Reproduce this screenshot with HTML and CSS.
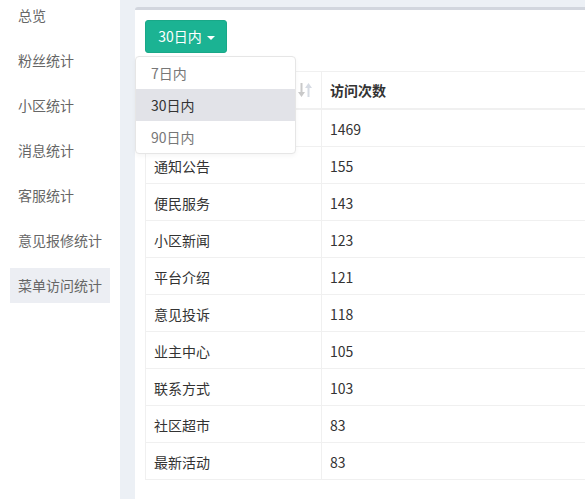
FILE: index.html
```html
<!DOCTYPE html>
<html lang="zh-CN">
<head>
<meta charset="utf-8">
<title>菜单访问统计</title>
<link rel="stylesheet" href="styles.css">
</head>
<body>
<div class="layout">
  <aside class="sidebar">
    <ul class="nav">
      <li class="nav-item">总览</li>
      <li class="nav-item">粉丝统计</li>
      <li class="nav-item">小区统计</li>
      <li class="nav-item">消息统计</li>
      <li class="nav-item">客服统计</li>
      <li class="nav-item">意见报修统计</li>
      <li class="nav-item active">菜单访问统计</li>
    </ul>
  </aside>
  <main class="main">
    <section class="box">
      <div class="toolbar">
        <button class="btn-green" type="button">30日内 <span class="caret"></span></button>
        <ul class="dropdown">
          <li class="dropdown-item">7日内</li>
          <li class="dropdown-item selected">30日内</li>
          <li class="dropdown-item">90日内</li>
        </ul>
      </div>
      <table class="data-table">
        <thead>
          <tr>
            <th class="col-name"><span class="th-inner">菜单名称<svg class="sort-icon" viewBox="0 0 14 14" width="14" height="14"><path d="M2.5 0h2v9h2.5l-3.5 5l-3.5-5h2.5z" fill="#c9c9c9"/><path d="M10.5 0l3.5 5h-2.5v9h-2v-9h-2.5z" fill="#d6dbe3"/></svg></span></th>
            <th>访问次数</th>
          </tr>
        </thead>
        <tbody>
          <tr><td>首页</td><td>1469</td></tr>
          <tr><td>通知公告</td><td>155</td></tr>
          <tr><td>便民服务</td><td>143</td></tr>
          <tr><td>小区新闻</td><td>123</td></tr>
          <tr><td>平台介绍</td><td>121</td></tr>
          <tr><td>意见投诉</td><td>118</td></tr>
          <tr><td>业主中心</td><td>105</td></tr>
          <tr><td>联系方式</td><td>103</td></tr>
          <tr><td>社区超市</td><td>83</td></tr>
          <tr><td>最新活动</td><td>83</td></tr>
        </tbody>
      </table>
    </section>
  </main>
</div>
</body>
</html>
```
FILE: styles.css
```css
html, body {
  margin: 0;
  padding: 0;
  height: 100%;
  overflow: hidden;
}
body {
  font-family: "Noto Sans CJK SC", "Liberation Sans", sans-serif;
  font-size: 14px;
  color: #333;
  background: #ffffff;
}
.layout {
  display: flex;
  height: 100%;
}
.sidebar {
  width: 120px;
  flex: 0 0 120px;
  background: #ffffff;
  padding: 0 10px;
  box-sizing: border-box;
}
.nav {
  list-style: none;
  margin: -2px 0 0 0;
  padding: 0;
}
.nav-item {
  width: 100px;
  height: 35px;
  line-height: 35px;
  padding-left: 8px;
  box-sizing: border-box;
  margin-bottom: 10px;
  color: #666;
  white-space: nowrap;
}
.nav-item.active {
  background: #eceef3;
}
.main {
  flex: 1 1 auto;
  background: #ecf0f5;
  padding: 7px 0 0 15px;
  overflow: hidden;
  min-width: 0;
}
.box {
  width: 620px;
  height: 100%;
  background: #ffffff;
  border-top: 3px solid #d2d6de;
  border-radius: 3px 0 0 0;
  padding: 10px;
  box-sizing: border-box;
}
.toolbar {
  position: relative;
  margin-bottom: 18px;
  height: 33px;
}
.btn-green {
  height: 33px;
  width: 82px;
  padding: 0 0 0 1px;
  border: 1px solid #19a888;
  border-radius: 3px;
  background: #1bb393;
  color: #ffffff;
  font-family: inherit;
  font-size: 14px;
  line-height: 31px;
  cursor: pointer;
}
.caret {
  display: inline-block;
  width: 0;
  height: 0;
  margin-left: 2px;
  vertical-align: middle;
  border-top: 4px solid #ffffff;
  border-left: 4px solid transparent;
  border-right: 4px solid transparent;
}
.dropdown {
  position: absolute;
  top: 36px;
  left: -10px;
  width: 159px;
  margin: 0;
  padding: 0;
  list-style: none;
  background: #ffffff;
  border: 1px solid #e6e6e6;
  border-radius: 4px;
  box-shadow: 0 2px 4px rgba(0, 0, 0, 0.04);
  z-index: 10;
  overflow: hidden;
}
.dropdown-item {
  height: 32px;
  line-height: 32px;
  padding: 0 15px;
  color: #777;
}
.dropdown-item.selected {
  background: #e2e3e8;
  color: #333;
}
.data-table {
  width: 100%;
  border-collapse: collapse;
  border: 1px solid #f0f0f0;
}
.data-table th,
.data-table td {
  border: 1px solid #f0f0f0;
  padding: 8px;
  line-height: 20px;
  text-align: left;
  color: #333;
}
.data-table td {
  padding: 9px 8px 7px 8px;
}
.data-table th {
  font-weight: bold;
  border-bottom: 2px solid #f0f0f0;
}
.data-table .col-name {
  width: 159px;
}
.th-inner {
  display: flex;
  align-items: center;
  justify-content: space-between;
}
.sort-icon {
  display: block;
  margin-right: 1px;
}
```
